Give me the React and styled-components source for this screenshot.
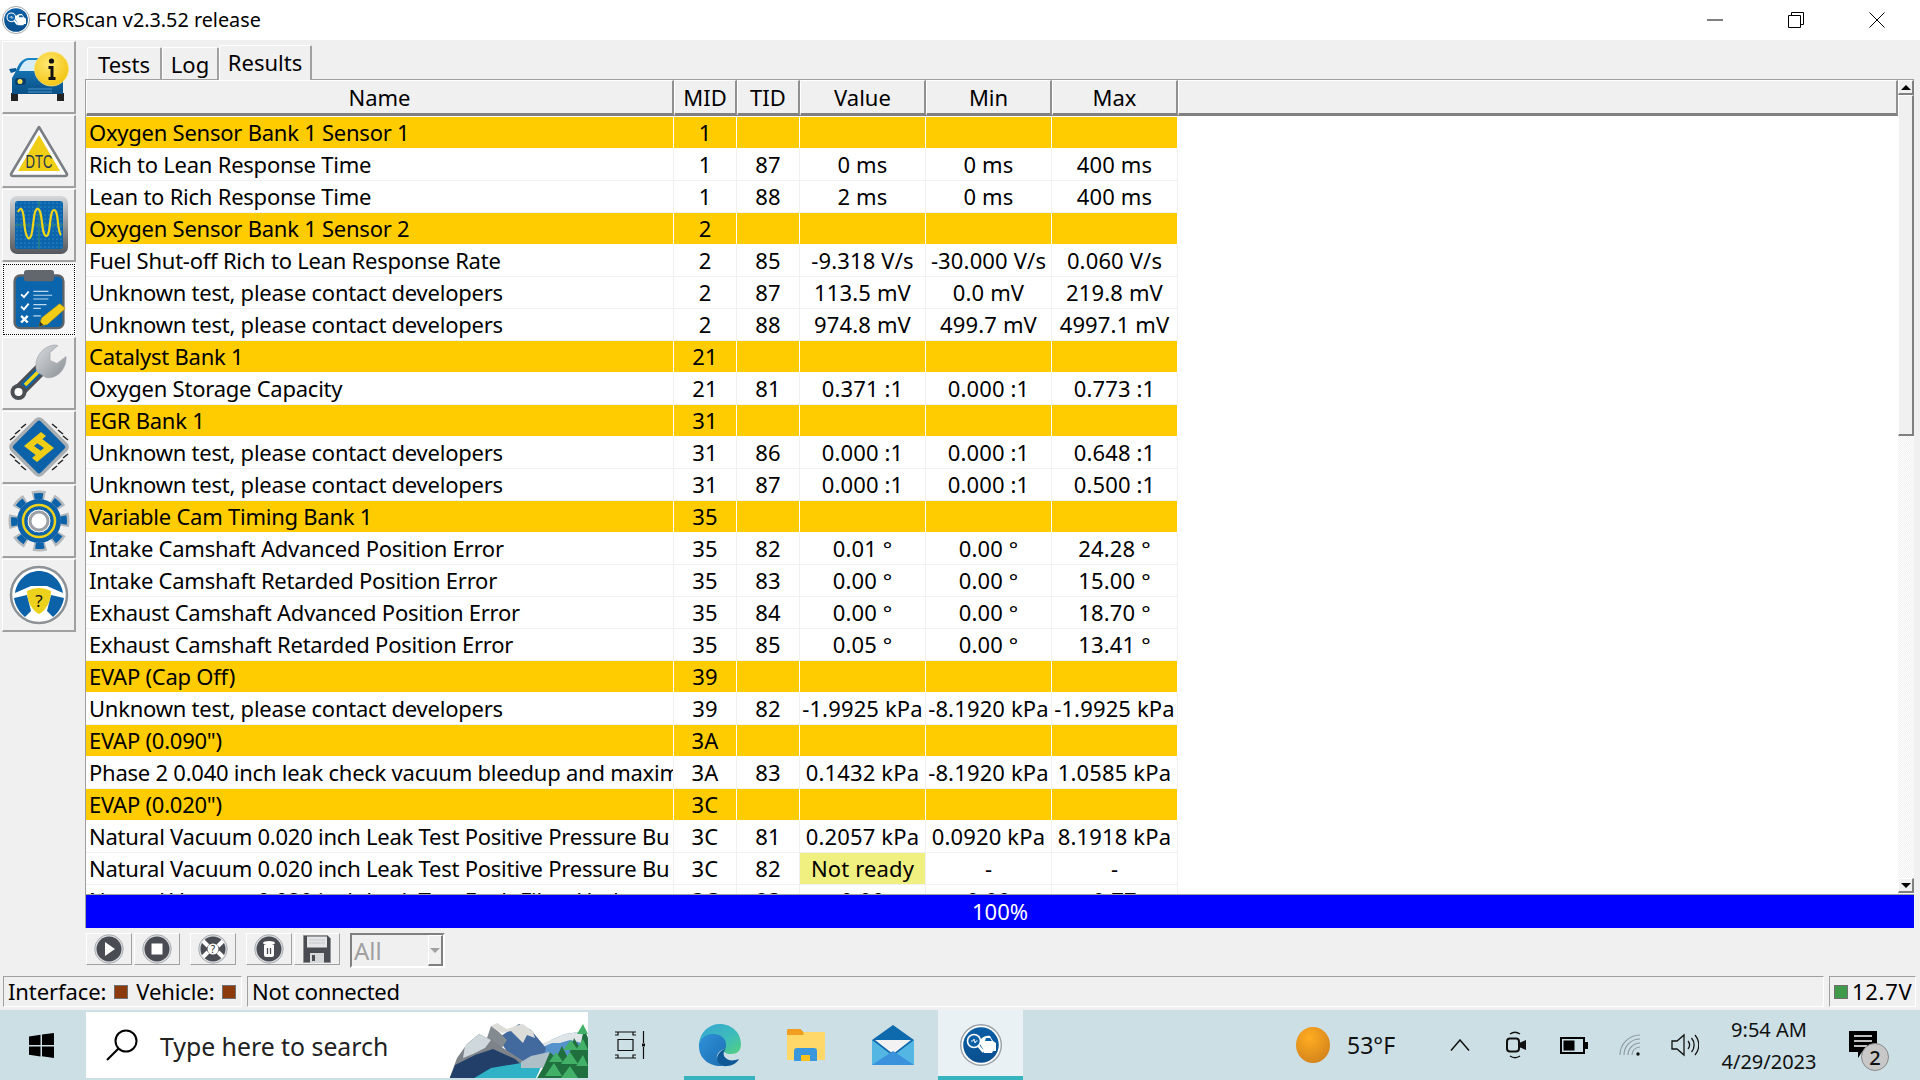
import React from "react";
import styled, { createGlobalStyle } from "styled-components";

const GlobalStyle = createGlobalStyle`
  html, body {
    margin: 0;
    padding: 0;
    background: #f0f0f0;
  }
  body {
    width: 1920px;
    height: 1080px;
    overflow: hidden;
    font-family: "Noto Sans", "DejaVu Sans", sans-serif;
    font-size: 22px;
    color: #000;
  }
`;

const Page = styled.div`
  width: 1920px;
  height: 1080px;
  display: flex;
  flex-direction: column;
`;

/* title bar */
const TitleBar = styled.div`
  height: 40px;
  flex: none;
  background: #fff;
  display: flex;
  align-items: center;
  padding-left: 2px;
`;
const TitleText = styled.span`
  margin-left: 6px;
  font-size: 19.8px;
  line-height: 42px;
`;
const WindowButtons = styled.div`
  margin-left: auto;
  padding-right: 3px;
  display: flex;
`;
const WindowButton = styled.div`
  width: 81px;
  height: 40px;
  display: flex;
  align-items: center;
  justify-content: center;
`;

/* main area */
const Main = styled.div`
  flex: 1;
  display: flex;
  min-height: 0;
`;
const Sidebar = styled.div`
  width: 85px;
  flex: none;
  padding: 1px 0 0 2px;
  box-sizing: border-box;
  display: flex;
  flex-direction: column;
  gap: 1px;
`;
const SideButton = styled.div`
  width: 74px;
  height: 73px;
  box-sizing: border-box;
  display: flex;
  align-items: center;
  justify-content: center;
  border: 1px solid;
  border-color: #fff #a0a0a0 #a0a0a0 #fff;
  border-width: 1px 2px 2px 1px;
  ${(p) =>
    p.$active &&
    `
    background: #f7f7f7;
    outline: 1px dotted #000;
    outline-offset: -2px;
    border-color: #fff;
  `}
`;
const Content = styled.div`
  flex: 1;
  min-width: 0;
  display: flex;
  flex-direction: column;
  padding-right: 6px;
`;

/* tabs */
const Tabs = styled.div`
  height: 39px;
  flex: none;
  display: flex;
  align-items: flex-end;
  padding-left: 2px;
`;
const Tab = styled.div`
  height: ${(p) => (p.$active ? "35px" : "32px")};
  width: ${(p) => p.$w}px;
  position: relative;
  z-index: ${(p) => (p.$active ? 1 : 0)};
  margin-bottom: ${(p) => (p.$active ? "-1px" : "0")};
  padding-bottom: ${(p) => (p.$active ? "3px" : "0")};
  box-sizing: border-box;
  display: flex;
  align-items: center;
  justify-content: center;
  background: #f0f0f0;
  border-top: 1px solid #fff;
  border-left: 1px solid #fff;
  border-right: 2px solid #a0a0a0;
  border-radius: 2px 2px 0 0;
`;

/* table */
const Pane = styled.div`
  flex: none;
  height: 814px;
  display: flex;
  border-top: 1px solid #a0a0a0;
  border-left: 1px solid #a0a0a0;
  background: #fff;
`;
const TableArea = styled.div`
  flex: 1;
  min-width: 0;
  overflow: hidden;
`;
const Header = styled.div`
  height: 36px;
  display: grid;
  grid-template-columns: 588px 63px 63px 126px 126px 126px 1fr;
  background: #f0f0f0;
`;
const HeadCell = styled.div`
  box-sizing: border-box;
  display: flex;
  align-items: center;
  justify-content: center;
  border-top: 1px solid #fff;
  border-left: 1px solid #fff;
  border-right: 2px solid #909090;
  border-bottom: 3px solid #808080;
`;
const Row = styled.div`
  height: 32px;
  width: 1092px;
  display: grid;
  grid-template-columns: 588px 63px 63px 126px 126px 126px;
  ${(p) => p.$first && "margin-top: 1px;"}
`;
const Cell = styled.div`
  box-sizing: border-box;
  height: 32px;
  line-height: 31px;
  white-space: nowrap;
  overflow: hidden;
  text-align: center;
  letter-spacing: 0.15px;
  background: ${(p) => (p.$group ? "#ffcc00" : p.$warn ? "#f0f080" : "#fff")};
  border-right: 1px solid ${(p) => (p.$group ? "#fff" : "#f0f0f0")};
  border-bottom: 1px solid ${(p) => (p.$group ? "#fff" : "#f0f0f0")};
`;
const NameCell = styled(Cell)`
  text-align: left;
  padding-left: 3px;
  letter-spacing: -0.24px;
`;
const Scrollbar = styled.div`
  width: 16px;
  flex: none;
  padding-bottom: 1px;
  box-sizing: border-box;
  display: flex;
  flex-direction: column;
  background: repeating-conic-gradient(#f0f0f0 0 25%, #fff 0 50%) 0 0 / 2px 2px;
`;
const ScrollArrow = styled.div`
  height: 15px;
  flex: none;
  box-sizing: border-box;
  background: #f0f0f0;
  border: 1px solid;
  border-width: 1px 2px 2px 1px;
  border-color: #fff #808080 #808080 #fff;
  display: flex;
  align-items: center;
  justify-content: center;
`;
const ScrollThumb = styled.div`
  height: 341px;
  flex: none;
  box-sizing: border-box;
  background: #f0f0f0;
  border: 1px solid;
  border-width: 1px 2px 2px 1px;
  border-color: #fff #808080 #808080 #fff;
`;
const ScrollGap = styled.div`
  flex: 1;
`;
const Arrow = styled.div`
  width: 0;
  height: 0;
  border-left: 5px solid transparent;
  border-right: 5px solid transparent;
  ${(p) => (p.$down ? "border-top: 5px solid #000;" : "border-bottom: 5px solid #000;")}
`;

/* progress */
const Progress = styled.div`
  flex: none;
  height: 34px;
  box-sizing: border-box;
  border-top: 1px solid #a0a0a0;
  border-left: 1px solid #a0a0a0;
  background: #0000ff;
  color: #fff;
  display: flex;
  align-items: center;
  justify-content: center;
  line-height: 33px;
`;

/* toolbar */
const Toolbar = styled.div`
  height: 35px;
  flex: none;
  margin-top: 5px;
  display: flex;
  align-items: flex-start;
  padding-left: 1px;
`;
const ToolButton = styled.div`
  width: 46px;
  height: 32px;
  box-sizing: border-box;
  margin-left: ${(p) => p.$gap || 0}px;
  display: flex;
  align-items: center;
  justify-content: center;
  border: 1px solid;
  border-color: #fff #a0a0a0 #a0a0a0 #fff;
`;
const Select = styled.div`
  width: 95px;
  height: 35px;
  margin-left: 10px;
  box-sizing: border-box;
  display: flex;
  border: 2px solid;
  border-color: #808080 #fff #fff #808080;
  color: #a0a0a0;
  font-size: 24px;
`;
const SelectValue = styled.div`
  flex: 1;
  padding-left: 2px;
  line-height: 31px;
`;
const SelectButton = styled.div`
  width: 15px;
  box-sizing: border-box;
  border: 1px solid;
  border-width: 1px 2px 2px 1px;
  border-color: #fff #808080 #808080 #fff;
  display: flex;
  align-items: center;
  justify-content: center;
`;
const SelectArrow = styled.div`
  width: 0;
  height: 0;
  border-left: 5px solid transparent;
  border-right: 5px solid transparent;
  border-top: 5px solid #a0a0a0;
`;

/* status bar */
const StatusBar = styled.div`
  height: 31px;
  flex: none;
  margin-top: 1px;
  padding: 0 4px 0 3px;
  display: flex;
  gap: 5px;
`;
const StatusPanel = styled.div`
  box-sizing: border-box;
  width: ${(p) => (p.$w ? `${p.$w}px` : "auto")};
  flex: ${(p) => (p.$w ? "none" : "1")};
  display: flex;
  align-items: center;
  padding-left: 4px;
  gap: ${(p) => p.$gap || 8}px;
  border: 1px solid;
  border-color: #a0a0a0 #fff #fff #a0a0a0;
  line-height: 29px;
  white-space: nowrap;
  letter-spacing: ${(p) => p.$spacing || 0}px;
`;
const Led = styled.span`
  width: 14px;
  height: 14px;
  box-sizing: border-box;
  border: 1px solid #707070;
  background: ${(p) => p.$color};
  flex: none;
`;

/* taskbar */
const Taskbar = styled.div`
  height: 70px;
  flex: none;
  margin-top: 3px;
  background: #cbdfe5;
  display: flex;
  color: #111;
`;
const StartSlot = styled.div`
  width: 86px;
  flex: none;
  display: flex;
  align-items: center;
  padding-left: 29px;
  box-sizing: border-box;
`;
const SearchBox = styled.div`
  width: 502px;
  height: 66px;
  margin-top: 2px;
  flex: none;
  box-sizing: border-box;
  background: #fff;
  display: flex;
  overflow: hidden;
`;
const SearchIconWrap = styled.div`
  margin: 17px 0 0 20px;
`;
const SearchText = styled.div`
  margin-left: 22px;
  font-size: 24.8px;
  line-height: 68px;
  color: #222;
`;
const SearchArt = styled.div`
  margin-left: auto;
  align-self: flex-end;
  display: flex;
`;
const TaskSlot = styled.div`
  width: ${(p) => p.$w}px;
  margin-left: ${(p) => p.$gap || 0}px;
  flex: none;
  box-sizing: border-box;
  display: flex;
  align-items: center;
  justify-content: center;
  background: ${(p) => (p.$open ? "#e9f1f4" : "transparent")};
  border-bottom: 4px solid ${(p) => (p.$on ? "#37b3c0" : "transparent")};
  padding-top: 4px;
`;
const Tray = styled.div`
  margin-left: auto;
  padding-right: 20px;
  display: flex;
  align-items: center;
`;
const Weather = styled.div`
  width: 140px;
  box-sizing: border-box;
  padding-left: 4px;
  display: flex;
  align-items: center;
  gap: 17px;
  font-size: 23px;
`;
const TraySlot = styled.div`
  width: ${(p) => p.$w}px;
  height: 70px;
  display: flex;
  align-items: center;
  justify-content: center;
`;
const Clock = styled.div`
  width: 114px;
  text-align: center;
  font-size: 20px;
  line-height: 32px;
  margin-top: 2px;
`;
const Notify = styled.div`
  width: 74px;
  height: 70px;
  display: flex;
  align-items: center;
  justify-content: center;
  position: relative;
`;
const Badge = styled.span`
  position: absolute;
  left: 35px;
  top: 33px;
  width: 28px;
  height: 28px;
  border-radius: 50%;
  background: #c8c8c8;
  border: 1px solid #888;
  box-sizing: border-box;
  display: flex;
  align-items: center;
  justify-content: center;
  font-size: 20px;
  font-weight: 500;
`;

const rows = [
  ["Oxygen Sensor Bank 1 Sensor 1", "1", "", "", "", "", "g"],
  ["Rich to Lean Response Time", "1", "87", "0 ms", "0 ms", "400 ms"],
  ["Lean to Rich Response Time", "1", "88", "2 ms", "0 ms", "400 ms"],
  ["Oxygen Sensor Bank 1 Sensor 2", "2", "", "", "", "", "g"],
  ["Fuel Shut-off Rich to Lean Response Rate", "2", "85", "-9.318 V/s", "-30.000 V/s", "0.060 V/s"],
  ["Unknown test, please contact developers", "2", "87", "113.5 mV", "0.0 mV", "219.8 mV"],
  ["Unknown test, please contact developers", "2", "88", "974.8 mV", "499.7 mV", "4997.1 mV"],
  ["Catalyst Bank 1", "21", "", "", "", "", "g"],
  ["Oxygen Storage Capacity", "21", "81", "0.371 :1", "0.000 :1", "0.773 :1"],
  ["EGR Bank 1", "31", "", "", "", "", "g"],
  ["Unknown test, please contact developers", "31", "86", "0.000 :1", "0.000 :1", "0.648 :1"],
  ["Unknown test, please contact developers", "31", "87", "0.000 :1", "0.000 :1", "0.500 :1"],
  ["Variable Cam Timing Bank 1", "35", "", "", "", "", "g"],
  ["Intake Camshaft Advanced Position Error", "35", "82", "0.01 °", "0.00 °", "24.28 °"],
  ["Intake Camshaft Retarded Position Error", "35", "83", "0.00 °", "0.00 °", "15.00 °"],
  ["Exhaust Camshaft Advanced Position Error", "35", "84", "0.00 °", "0.00 °", "18.70 °"],
  ["Exhaust Camshaft Retarded Position Error", "35", "85", "0.05 °", "0.00 °", "13.41 °"],
  ["EVAP (Cap Off)", "39", "", "", "", "", "g"],
  ["Unknown test, please contact developers", "39", "82", "-1.9925 kPa", "-8.1920 kPa", "-1.9925 kPa"],
  ['EVAP (0.090")', "3A", "", "", "", "", "g"],
  ["Phase 2 0.040 inch leak check vacuum bleedup and maxim", "3A", "83", "0.1432 kPa", "-8.1920 kPa", "1.0585 kPa"],
  ['EVAP (0.020")', "3C", "", "", "", "", "g"],
  ["Natural Vacuum 0.020 inch Leak Test Positive Pressure Bu", "3C", "81", "0.2057 kPa", "0.0920 kPa", "8.1918 kPa"],
  ["Natural Vacuum 0.020 inch Leak Test Positive Pressure Bu", "3C", "82", "Not ready", "-", "-"],
  ["Natural Vacuum 0.020 inch Leak Test Fault Filter Update", "3C", "83", "0.00", "0.00", "0.77"],
];

const LogoMark = ({ size }) => (
  <svg width={size} height={size} viewBox="0 0 42 42">
    <defs>
      <linearGradient id="logoBlue" x1="0" y1="0" x2="0" y2="1">
        <stop offset="0" stopColor="#0b5fa5" />
        <stop offset="1" stopColor="#0a4f8e" />
      </linearGradient>
    </defs>
    <circle cx="21" cy="21" r="20.3" fill="#fff" stroke="#9aa0a6" strokeWidth="1.4" />
    <circle cx="21" cy="21" r="17.8" fill="url(#logoBlue)" />
    <circle cx="14" cy="17" r="6.5" fill="#0b5fa5" stroke="#fff" strokeWidth="1.6" />
    <path d="M11 17h2l1-2 1 4 1-2h1.5" fill="none" stroke="#fff" strokeWidth="0.9" />
    <path d="M18.5 22l5 6" stroke="#fff" strokeWidth="2.6" />
    <path d="M21 15c3-3 6-3.500 9-3l3 5 3 2v8h-3l-1 2h-8l-1-4-3-5z" fill="#fff" />
    <path d="M26 14h4l2 3h-7z" fill="#0b5fa5" />
  </svg>
);

const CarIcon = () => (
  <svg width="70" height="70" viewBox="0 0 70 70">
    <defs>
      <linearGradient id="carBody" x1="0" y1="0" x2="0" y2="1">
        <stop offset="0" stopColor="#1a86c8" />
        <stop offset="1" stopColor="#0a4f86" />
      </linearGradient>
      <radialGradient id="coin" cx="0.4" cy="0.35" r="0.8">
        <stop offset="0" stopColor="#ffe872" />
        <stop offset="1" stopColor="#f0bd00" />
      </radialGradient>
    </defs>
    <rect x="7" y="51" width="7" height="8" fill="#222" />
    <rect x="53" y="51" width="7" height="8" fill="#222" />
    <path d="M5 27l7-1 1 3-6 2z" fill="#0c5c98" />
    <path d="M12 29c2-7 6-12 12-13h18l10 14 7 8v14H8V36z" fill="url(#carBody)" />
    <path d="M15 29c2-6 5-10 9-11h12v11z" fill="#d6ecf7" />
    <rect x="11" y="36" width="11" height="7" rx="3" fill="#0b3e68" />
    <circle cx="16" cy="39.500" r="2.500" fill="#ffe25a" />
    <path d="M24 47h24M24 50h24" stroke="#5aa9d8" strokeWidth="0.8" />
    <circle cx="47.500" cy="27" r="17" fill="url(#coin)" stroke="#f7e27a" strokeWidth="0.8" />
    <circle cx="47.500" cy="19" r="2.600" fill="#111" />
    <path d="M44.500 24h5v11h2v3h-7v-3h2v-8h-2z" fill="#111" />
  </svg>
);

const DtcIcon = () => (
  <svg width="70" height="70" viewBox="0 0 70 70">
    <path d="M35 11L63 58a2 2 0 0 1-2 2H9a2 2 0 0 1-2-2z" fill="#fff" stroke="#7a7f85" strokeWidth="2.500" strokeLinejoin="round" />
    <path d="M35 19L56 55H14z" fill="#f0ce16" />
    <text x="35" y="52" textAnchor="middle" fontFamily="Liberation Sans Narrow, Liberation Sans, sans-serif" fontSize="19" textLength="27" lengthAdjust="spacingAndGlyphs" fill="#23344e">
      DTC
    </text>
  </svg>
);

const ScopeIcon = () => (
  <svg width="70" height="70" viewBox="0 0 70 70">
    <defs>
      <linearGradient id="scopeFrame" x1="0" y1="0" x2="0" y2="1">
        <stop offset="0" stopColor="#d5d8da" />
        <stop offset="1" stopColor="#54585c" />
      </linearGradient>
      <pattern id="scopeDots" width="4" height="4" patternUnits="userSpaceOnUse">
        <circle cx="1" cy="1" r="0.5" fill="#6fb0dc" />
      </pattern>
    </defs>
    <rect x="6" y="6" width="58" height="58" rx="7" fill="url(#scopeFrame)" />
    <rect x="11" y="11" width="48" height="48" rx="3" fill="#0a65ac" />
    <rect x="11" y="11" width="48" height="48" fill="url(#scopeDots)" />
    <path d="M35 11v48M11 35h48" stroke="#4a9a5e" strokeWidth="0.8" />
    <path d="M14 22c3-6 5-3 6 8 1 14 4 23 7 16 3-8 2-28 7-27 5 1 3 26 8 27 5 1 3-26 8-26 5 0 3 22 7 25" fill="none" stroke="#efd51a" strokeWidth="2.200" />
  </svg>
);

const ClipboardIcon = () => (
  <svg width="62" height="62" viewBox="0 0 66 66">
    <rect x="7" y="8" width="52" height="56" rx="6" fill="#0a65ac" stroke="#5f6469" strokeWidth="2.500" />
    <rect x="17" y="2" width="32" height="12" rx="3" fill="#62676d" />
    <path d="M14 28l3 3 5-6M14 41l3 3 5-6" fill="none" stroke="#fff" strokeWidth="2" />
    <path d="M14 51l7 7M21 51l-7 7" stroke="#fff" strokeWidth="2.500" />
    <path d="M27 25h16M27 29h20M27 33h16M27 39h14M27 43h8M27 51h8" stroke="#bcd9ee" strokeWidth="1.300" />
    <path d="M55 38l6 5-19 17-9 2 3-9z" fill="#f2cd17" stroke="#c59b0a" strokeWidth="0.700" />
    <path d="M33 62l1-5 4 4z" fill="#333" />
  </svg>
);

const WrenchIcon = () => (
  <svg width="70" height="70" viewBox="0 0 70 70">
    <defs>
      <linearGradient id="wrenchHead" x1="0" y1="0" x2="1" y2="1">
        <stop offset="0" stopColor="#d9dde0" />
        <stop offset="1" stopColor="#8a8f94" />
      </linearGradient>
    </defs>
    <path d="M14 54L36 32" stroke="#4b4f53" strokeWidth="13" strokeLinecap="round" />
    <path d="M18 50L36 32" stroke="#0c62a8" strokeWidth="8" />
    <path d="M21 47L35 33" stroke="#efd51a" strokeWidth="3.500" />
    <circle cx="14.500" cy="54" r="8" fill="#4b4f53" />
    <circle cx="14.500" cy="54" r="4" fill="#fff" />
    <path d="M33 34c-4-11 3-25 17-27l4 .5-8 7v8l7 3 9-7c1 12-9 23-20 21z" fill="url(#wrenchHead)" stroke="#9aa0a5" strokeWidth="0.600" />
  </svg>
);

const ChipIcon = () => (
  <svg width="70" height="70" viewBox="0 0 70 70">
    <g stroke="#222" strokeWidth="1.500">
      <path d="M11 24l-5 4M16 18l-5 4M22 12l-5 4M48 12l5 4M54 18l5 4M59 24l5 4M11 46l-5-4M16 52l-5-4M22 58l-5-4M48 58l5-4M54 52l5-4M59 46l5-4" />
    </g>
    <rect x="14" y="14" width="42" height="42" rx="4" transform="rotate(45 35 35)" fill="#0c62a8" stroke="#a9aeb3" strokeWidth="3.500" />
    <path d="M37 20l5 4-12 10 7 5-4 5-13-10zM33 50l-5-4 12-10-7-5 4-5 13 10z" fill="#f0ce16" />
  </svg>
);

const GearIcon = () => (
  <svg width="70" height="70" viewBox="0 0 70 70">
    <circle cx="35" cy="35" r="26" fill="none" stroke="#b4b9bd" strokeWidth="9" strokeDasharray="12.600 7.800" transform="rotate(-16 35 35)" />
    <circle cx="35" cy="35" r="25" fill="none" stroke="#0c62a8" strokeWidth="6" strokeDasharray="8.500 11.100" transform="rotate(-12 35 35)" />
    <circle cx="35" cy="35" r="22" fill="#0c62a8" />
    <circle cx="35" cy="35" r="16" fill="none" stroke="#ecd21c" strokeWidth="2.500" />
    <circle cx="35" cy="35" r="12" fill="#fff" stroke="#0c62a8" strokeWidth="1" />
    <circle cx="35" cy="35" r="9" fill="#fff" stroke="#9aa0a5" strokeWidth="3" />
  </svg>
);

const WheelIcon = () => (
  <svg width="70" height="70" viewBox="0 0 70 70">
    <circle cx="35" cy="35" r="28" fill="#fff" stroke="#8d9297" strokeWidth="2.500" />
    <path d="M11 33C13 20 23 11 35 11s22 9 24 22L43 26H27z" fill="#0c62a8" />
    <path d="M10 38l13-3 4 16-6 6C15 52 11 45 10 38zM60 38l-13-3-4 16 6 6c6-5 10-12 11-19z" fill="#0c62a8" />
    <path d="M23 31c8-4 16-4 24 0 0 10-5 20-12 23-7-3-12-13-12-23z" fill="#ecd21c" />
    <text x="35" y="47" textAnchor="middle" fontFamily="Noto Sans, sans-serif" fontSize="17" fill="#111">
      ?
    </text>
  </svg>
);

const ToolRound = ({ children }) => (
  <svg width="30" height="30" viewBox="0 0 30 30">
    <circle cx="15" cy="15" r="14.300" fill="#d8dbde" stroke="#9ea2a6" strokeWidth="0.800" />
    <circle cx="15" cy="15" r="12.500" fill="#4a4c54" />
    {children}
  </svg>
);

const FloppyIcon = () => (
  <svg width="30" height="30" viewBox="0 0 30 30">
    <path d="M1.500 1.500h24l3 3v24h-27z" fill="#4a4c54" stroke="#8b8e92" strokeWidth="0.800" />
    <rect x="5" y="2.500" width="20" height="11" fill="#e4e5e7" />
    <path d="M7 6h16M7 9h16" stroke="#b8bcc0" strokeWidth="0.700" />
    <rect x="8" y="19" width="14" height="10" fill="#d5d7d9" />
    <rect x="10" y="21" width="3" height="6" fill="#4a4c54" />
  </svg>
);

const Mountains = () => (
  <svg width="139" height="66" viewBox="8 2 139 66">
    <path d="M100 40l10-10 14-6 14-2 9 8v14l-37 8z" fill="#5592cc" />
    <path d="M100 34l10-4 14-6 14-2 9 8-6 3-12-3-10 3-8 0-7 3z" fill="#dfe5e6" />
    <path d="M57 28l21-14 12 6 15 18-3 10-27 7z" fill="#436a9e" />
    <path d="M50 16l6-3 10 6 8-3 8-2 10 8 2 6-8-3-4 8-12-12-9 2z" fill="#dcdcd8" />
    <path d="M50 16l8 6 8 8-8 12-12-14z" fill="#838a90" />
    <path d="M8 70l8-22 10-14 12-10 12 6 12 8 22 14 6 8-14 10z" fill="#7d8389" />
    <path d="M24 36l14-12 12 6-6 8-12 6-10 4z" fill="#cfd8dd" />
    <path d="M8 70l6-15 20-10 18-6 22 10 10 9-30 12z" fill="#223f69" />
    <path d="M30 70l20-12 30-5 20 4-6 13z" fill="#30b2c6" />
    <path d="M80 52l10-6 18-4 6 6-12 10-22 0z" fill="#aebfc8" />
    <path d="M95 70l8-14 6-14 6 6 6-12 6 12 6-20 6 10 4-20 4 10v42z" fill="#1f6f3f" />
    <path d="M108 52l7-10 7 10zM104 66l9-13 8 13zM122 40l8-10 7 10zM120 54l9-12 8 12zM120 68l9-12 8 12zM136 24l6-10 5 10zM135 40l7-11 5 11zM135 56l7-11 5 11z" fill="#43b068" />
  </svg>
);

const EdgeIcon = () => (
  <svg width="43" height="44" viewBox="0 0 43 44">
    <defs>
      <linearGradient id="edgeTop" x1="0" y1="0" x2="1" y2="1">
        <stop offset="0" stopColor="#36a5d6" />
        <stop offset="0.6" stopColor="#3ebdb8" />
        <stop offset="1" stopColor="#55d27c" />
      </linearGradient>
      <linearGradient id="edgeBack" x1="0" y1="0" x2="1" y2="1">
        <stop offset="0" stopColor="#2f92d8" />
        <stop offset="1" stopColor="#1c6db2" />
      </linearGradient>
    </defs>
    <path d="M1 21C2 9 11 1 22 1c12 0 21 9 21 20 0 7-4 10-10 10-5 0-9-2-7-6 1-7-5-12-12-12-6 0-11 3-13 8z" fill="url(#edgeTop)" />
    <path d="M1 21c2-7 8-10 14-10 9 0 14 6 13 13l-1 2c-5 1-9 5-8 10 1 3 3 5 6 7C12 44 0 36 1 21z" fill="url(#edgeBack)" />
    <path d="M28 26c-3 0-9 4-9 10 0 4 5 8 10 7 5 0 10-3 12-7-3 1-7 2-10 1-6-2-7-8-3-11z" fill="#0f5a96" />
  </svg>
);

const FolderIcon = () => (
  <svg width="38" height="32" viewBox="0 0 38 32">
    <rect x="0" y="3" width="38" height="28" rx="1" fill="#ffd869" />
    <path d="M0 1.500a1.500 1.500 0 0 1 1.500-1.500h12l3 3v3H0z" fill="#f09d20" />
    <path d="M7 32V22a3 3 0 0 1 3-3h17a3 3 0 0 1 3 3v10h-7v-6h-9v6z" fill="#3a97de" />
    <rect x="14" y="26" width="9" height="6" fill="#ffc21c" />
  </svg>
);

const MailIcon = () => (
  <svg width="42" height="40" viewBox="0 0 42 40">
    <path d="M0 15L21 0l21 15v25H0z" fill="#0f69ad" />
    <path d="M3 15h36l-18 14z" fill="#f2f2f2" />
    <path d="M0 15l21 16 21-16v25H0z" fill="#54b6e2" />
    <path d="M0 40l21-14 21 14z" fill="#3a92dd" />
  </svg>
);

const Sun = () => (
  <svg width="34" height="36" viewBox="0 0 34 36">
    <defs>
      <radialGradient id="sun" cx="0.4" cy="0.3" r="0.8">
        <stop offset="0" stopColor="#ffad22" />
        <stop offset="1" stopColor="#d0801a" />
      </radialGradient>
    </defs>
    <ellipse cx="17" cy="18" rx="17" ry="18" fill="url(#sun)" />
  </svg>
);

export default function App() {
  return (
    <Page>
      <GlobalStyle />
      <TitleBar>
        <LogoMark size={28} />
        <TitleText>FORScan v2.3.52 release</TitleText>
        <WindowButtons>
          <WindowButton>
            <svg width="16" height="16" viewBox="0 0 16 16">
              <path d="M0 8h16" stroke="#000" strokeWidth="1" />
            </svg>
          </WindowButton>
          <WindowButton>
            <svg width="16" height="16" viewBox="0 0 16 16">
              <path d="M0.500 3.500h12v12h-12zM3.500 3.500v-3h12v12h-3" fill="none" stroke="#000" strokeWidth="1" />
            </svg>
          </WindowButton>
          <WindowButton>
            <svg width="16" height="16" viewBox="0 0 16 16">
              <path d="M0.500 0.500l15 15M15.500 0.500l-15 15" stroke="#000" strokeWidth="1" />
            </svg>
          </WindowButton>
        </WindowButtons>
      </TitleBar>

      <Main>
        <Sidebar>
          <SideButton><CarIcon /></SideButton>
          <SideButton><DtcIcon /></SideButton>
          <SideButton><ScopeIcon /></SideButton>
          <SideButton $active><ClipboardIcon /></SideButton>
          <SideButton><WrenchIcon /></SideButton>
          <SideButton><ChipIcon /></SideButton>
          <SideButton><GearIcon /></SideButton>
          <SideButton><WheelIcon /></SideButton>
        </Sidebar>

        <Content>
          <Tabs>
            <Tab $w={75}>Tests</Tab>
            <Tab $w={57}>Log</Tab>
            <Tab $w={93} $active>Results</Tab>
          </Tabs>

          <Pane>
            <TableArea>
              <Header>
                <HeadCell>Name</HeadCell>
                <HeadCell>MID</HeadCell>
                <HeadCell>TID</HeadCell>
                <HeadCell>Value</HeadCell>
                <HeadCell>Min</HeadCell>
                <HeadCell>Max</HeadCell>
                <HeadCell />
              </Header>
              {rows.map((r, i) => {
                const group = r[6] === "g";
                return (
                  <Row key={i} $first={i === 0}>
                    <NameCell $group={group}>{r[0]}</NameCell>
                    <Cell $group={group}>{r[1]}</Cell>
                    <Cell $group={group}>{r[2]}</Cell>
                    <Cell $group={group} $warn={r[3] === "Not ready"}>{r[3]}</Cell>
                    <Cell $group={group}>{r[4]}</Cell>
                    <Cell $group={group}>{r[5]}</Cell>
                  </Row>
                );
              })}
            </TableArea>
            <Scrollbar>
              <ScrollArrow><Arrow /></ScrollArrow>
              <ScrollThumb />
              <ScrollGap />
              <ScrollArrow><Arrow $down /></ScrollArrow>
            </Scrollbar>
          </Pane>

          <Progress>100%</Progress>

          <Toolbar>
            <ToolButton>
              <ToolRound><path d="M11 8l10 7-10 7z" fill="#fff" /></ToolRound>
            </ToolButton>
            <ToolButton $gap={2}>
              <ToolRound><rect x="9.500" y="9.500" width="11" height="11" fill="#fff" /></ToolRound>
            </ToolButton>
            <ToolButton $gap={10}>
              <ToolRound>
                <path d="M5 7l5 5M25 7l-5 5M5 23l5-5M25 23l-5-5" stroke="#fff" strokeWidth="4" />
                <circle cx="15" cy="15" r="5.500" fill="#fff" />
                <text x="15" y="19" textAnchor="middle" fontFamily="Noto Sans, sans-serif" fontSize="10" fill="#222">?</text>
              </ToolRound>
            </ToolButton>
            <ToolButton $gap={10}>
              <ToolRound>
                <ellipse cx="15" cy="9" rx="6" ry="2" fill="#fff" />
                <path d="M10 11h10v10a2 2 0 0 1-2 2h-6a2 2 0 0 1-2-2z" fill="#fff" />
                <path d="M13.500 14v6M16.500 14v6" stroke="#4a4c54" strokeWidth="1.300" />
              </ToolRound>
            </ToolButton>
            <ToolButton $gap={2}><FloppyIcon /></ToolButton>
            <Select>
              <SelectValue>All</SelectValue>
              <SelectButton><SelectArrow /></SelectButton>
            </Select>
          </Toolbar>
        </Content>
      </Main>

      <StatusBar>
        <StatusPanel $w={239} $spacing={-0.1}>
          Interface:<Led $color="#8c3a0c" />Vehicle:<Led $color="#8c3a0c" />
        </StatusPanel>
        <StatusPanel $spacing={-0.3}>Not connected</StatusPanel>
        <StatusPanel $w={87} $spacing={0.7} $gap={4}><Led $color="#3f9b4a" />12.7V</StatusPanel>
      </StatusBar>

      <Taskbar>
        <StartSlot>
          <svg width="25" height="25" viewBox="0 0 25 25">
            <path d="M0 3.500l11.500-1.700V12H0zM13 1.600L25 0v12H13zM0 13.500h11.500v10L0 21.800zM13 13.500h12V25l-12-1.700z" fill="#000" />
          </svg>
        </StartSlot>
        <SearchBox>
          <SearchIconWrap>
            <svg width="32" height="32" viewBox="0 0 32 32">
              <circle cx="20" cy="12" r="10.500" fill="none" stroke="#000" strokeWidth="2" />
              <path d="M12.500 19.500L1 31" stroke="#000" strokeWidth="2.200" />
            </svg>
          </SearchIconWrap>
          <SearchText>Type here to search</SearchText>
          <SearchArt><Mountains /></SearchArt>
        </SearchBox>
        <TaskSlot $w={84}>
          <svg width="30" height="28" viewBox="0 0 30 28">
            <path d="M0 1h21M3 1v3H0M18 1v3h3M3 8.500h15v11H3zM0 27h21M3 27v-3H0M18 27v-3h3M28.500 0v12M28.500 16v12" fill="none" stroke="#111" strokeWidth="1.200" />
            <rect x="27" y="12.500" width="3" height="3" fill="#111" />
          </svg>
        </TaskSlot>
        <TaskSlot $w={71} $gap={12} $on><EdgeIcon /></TaskSlot>
        <TaskSlot $w={102}><FolderIcon /></TaskSlot>
        <TaskSlot $w={72}><MailIcon /></TaskSlot>
        <TaskSlot $w={85} $gap={9} $on $open><LogoMark size={42} /></TaskSlot>
        <Tray>
          <Weather><Sun />53°F</Weather>
          <TraySlot $w={56}>
            <svg width="20" height="12" viewBox="0 0 20 12">
              <path d="M1 11.500L10 1l9 10.500" fill="none" stroke="#111" strokeWidth="1.500" />
            </svg>
          </TraySlot>
          <TraySlot $w={57}>
            <svg width="21" height="28" viewBox="0 0 21 28">
              <rect x="1" y="7.500" width="12" height="13" rx="3" fill="none" stroke="#111" strokeWidth="2" />
              <path d="M13 12l7-3v10l-7-3z" fill="#111" />
              <path d="M4 3c3-2 7-2 10 0M4 25c3 2 7 2 10 0" fill="none" stroke="#111" strokeWidth="1.500" />
            </svg>
          </TraySlot>
          <TraySlot $w={57}>
            <svg width="28" height="17" viewBox="0 0 28 17">
              <rect x="1" y="1" width="23" height="15" fill="none" stroke="#000" strokeWidth="2" />
              <rect x="3.500" y="3.500" width="11" height="10" fill="#000" />
              <rect x="24" y="5" width="4" height="7" fill="#000" />
            </svg>
          </TraySlot>
          <TraySlot $w={56}>
            <svg width="22" height="22" viewBox="0 0 22 22">
              <path d="M1 21C1 10 10 1 21 1M5 21C5 12 12 5 21 5M9 21c0-6 5-12 12-12" fill="none" stroke="#8f9a9f" strokeWidth="1.100" />
              <path d="M13 21c0-4 3-8 8-8" fill="none" stroke="#8f9a9f" strokeWidth="1.100" />
              <circle cx="19" cy="20" r="1.700" fill="#111" />
            </svg>
          </TraySlot>
          <TraySlot $w={54}>
            <svg width="28" height="24" viewBox="0 0 28 24">
              <path d="M1 8h5l7-6v20l-7-6H1z" fill="none" stroke="#111" strokeWidth="1.300" />
              <path d="M17 8c2 2.500 2 5.500 0 8M20.500 5c3.500 4 3.500 10 0 14M24 2c5 6 5 14 0 20" fill="none" stroke="#111" strokeWidth="1.300" />
            </svg>
          </TraySlot>
          <Clock>
            <div>9:54 AM</div>
            <div>4/29/2023</div>
          </Clock>
          <Notify>
            <svg width="28" height="28" viewBox="0 0 28 28">
              <path d="M0 0h28v21H13l-4 6v-6H0z" fill="#000" />
              <path d="M5 5h18M5 10h18M5 15h13" stroke="#fff" strokeWidth="1.500" />
            </svg>
            <Badge>2</Badge>
          </Notify>
        </Tray>
      </Taskbar>
    </Page>
  );
}
